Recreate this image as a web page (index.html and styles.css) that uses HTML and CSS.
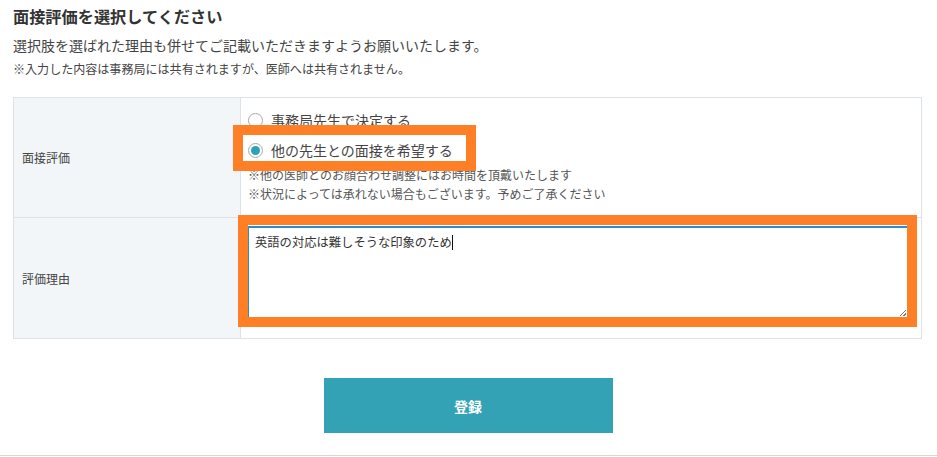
FILE: index.html
```html
<!DOCTYPE html>
<html lang="ja">
<head>
<meta charset="utf-8">
<title>面接評価</title>
<link rel="stylesheet" href="styles.css">
</head>
<body>
<div class="page">
  <h1 class="title">面接評価を選択してください</h1>
  <p class="lead">選択肢を選ばれた理由も併せてご記載いただきますようお願いいたします。</p>
  <p class="note">※入力した内容は事務局には共有されますが、医師へは共有されません。</p>

  <div class="form-table">
    <div class="label-cell">面接評価</div>
    <div class="value-cell value-radios">
      <label class="radio"><span class="radio-dot"></span><span>事務局先生で決定する</span></label>
      <label class="radio"><span class="radio-dot checked"></span><span>他の先生との面接を希望する</span></label>
      <p class="radio-note">※他の医師とのお顔合わせ調整にはお時間を頂戴いたします</p>
      <p class="radio-note">※状況によっては承れない場合もございます。予めご了承ください</p>
    </div>
    <div class="label-cell label-last">評価理由</div>
    <div class="value-cell value-text value-last">
      <div class="textarea">英語の対応は難しそうな印象のため<span class="caret"></span><span class="resizer"></span></div>
    </div>
  </div>

  <div class="actions">
    <button class="submit" type="button">登録</button>
  </div>
</div>
<div class="bottom-line"></div>

<div class="highlight highlight-radio"></div>
<div class="highlight highlight-text"></div>
</body>
</html>
```

FILE: styles.css
```css
* { box-sizing: border-box; }

html, body {
  margin: 0;
  padding: 0;
  background: #fff;
}

body {
  position: relative;
  width: 937px;
  height: 457px;
  overflow: hidden;
  font-family: "Noto Sans CJK JP", "Noto Sans", sans-serif;
  color: #333;
}

.page {
  padding: 4px 15px 0 13px;
}

.title {
  margin: 0;
  font-size: 16.2px;
  line-height: 24px;
  font-weight: 700;
  color: #333;
}

.lead {
  margin: 7px 0 0;
  font-size: 14px;
  line-height: 20px;
  color: #444;
}

.note {
  margin: 4px 0 0;
  font-size: 12.05px;
  line-height: 20px;
  color: #444;
}

.form-table {
  margin-top: 18px;
  display: grid;
  grid-template-columns: 227px 1fr;
  border: 1px solid #dde2e8;
  width: 909px;
}

.label-cell {
  background: #f3f6f9;
  border-right: 1px solid #dde2e8;
  border-bottom: 1px solid #dde2e8;
  display: flex;
  align-items: center;
  padding-left: 8px;
  font-size: 12px;
  color: #444;
}

.value-cell {
  border-bottom: 1px solid #dde2e8;
}

.label-last, .value-last { border-bottom: none; }

.value-radios {
  padding: 7px 0 14px 7px;
}

.radio {
  display: flex;
  align-items: center;
  height: 30px;
  font-size: 14px;
  color: #444;
}

.radio-dot {
  width: 15px;
  height: 15px;
  border: 1px solid #a9a9a9;
  border-radius: 50%;
  margin-right: 8px;
  display: flex;
  align-items: center;
  justify-content: center;
  background: #fff;
}

.radio-dot.checked::after {
  content: "";
  width: 9px;
  height: 9px;
  border-radius: 50%;
  background: #2ea2b5;
}

.radio-note {
  margin: 0;
  font-size: 12px;
  line-height: 19px;
  color: #555;
}

.value-text {
  padding: 8px 13px 20px 7px;
}

.textarea {
  position: relative;
  height: 92px;
  border: 1px solid #2a8fd0;
  border-top-width: 2px;
  padding: 5px 6px;
  font-size: 12.3px;
  line-height: 18px;
  color: #333;
  background: #fff;
}

.caret {
  display: inline-block;
  width: 1px;
  height: 15px;
  background: #111;
  vertical-align: -3px;
}

.resizer {
  position: absolute;
  right: 1px;
  bottom: 1px;
  width: 6px;
  height: 6px;
  background: linear-gradient(135deg, transparent 45%, #777 45%, #777 55%, transparent 55%, transparent 75%, #777 75%, #777 85%, transparent 85%);
}

.actions {
  display: flex;
  justify-content: center;
  margin-top: 39px;
  padding-left: 1px;
}

.submit {
  width: 289px;
  height: 55px;
  border: none;
  background: #32a2b4;
  color: #fff;
  font-family: "Noto Sans CJK JP", sans-serif;
  font-size: 14px;
  font-weight: 700;
}

.bottom-line {
  margin-top: 22px;
  height: 1px;
  background: #d6d6d6;
}

.highlight {
  position: absolute;
  border: 10px solid #ff7f27;
}

.highlight-radio {
  left: 233px;
  top: 125px;
  width: 243px;
  height: 46px;
}

.highlight-text {
  left: 238px;
  top: 215px;
  width: 679px;
  height: 112px;
}
```
